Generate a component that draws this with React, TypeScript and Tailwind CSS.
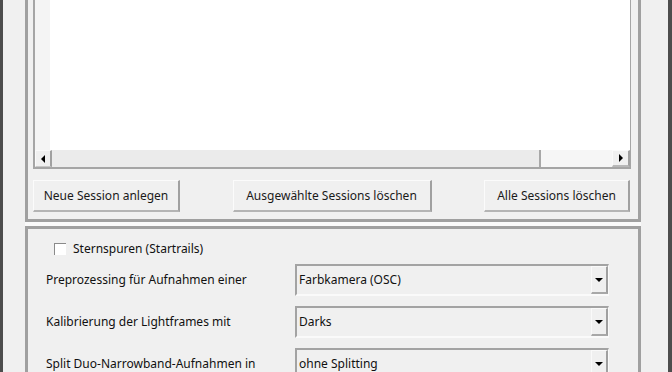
import React from 'react'

function WinButton({ label, width }: { label: string; width: string }) {
  return (
    <div
      className={`${width} h-[32px] flex items-center justify-center bg-[#f0f0f0] border-t border-l border-[#fbfbfb] border-r-2 border-b-2 border-r-[#a0a0a0] border-b-[#b4b4b4] text-[12px] text-[#1a1a1a]`}
    >
      {label}
    </div>
  )
}

function ComboBox({ value }: { value: string }) {
  return (
    <div className="w-[314px] h-[32px] flex bg-[#f0f0f0] border-t-2 border-l-2 border-[#a3a3a3] border-r border-b-2 border-r-[#fafafa] border-b-[#fafafa]">
      <div className="flex-1 flex items-center pl-[2px] text-[12px] text-[#111]">{value}</div>
      <div className="w-[17px] flex items-center justify-center border-t border-l border-[#fafafa] border-r-2 border-b-2 border-r-[#a0a0a0] border-b-[#a8a8a8]">
        <div className="w-0 h-0 border-l-[4px] border-r-[4px] border-t-[4px] border-l-transparent border-r-transparent border-t-black" />
      </div>
    </div>
  )
}

const rows = [
  { label: 'Preprozessing für Aufnahmen einer', value: 'Farbkamera (OSC)' },
  { label: 'Kalibrierung der Lightframes mit', value: 'Darks' },
  { label: 'Split Duo-Narrowband-Aufnahmen in', value: 'ohne Splitting' },
]

export default function App() {
  return (
    <div
      className="w-[672px] h-[372px] overflow-hidden bg-[#f0f0f0] border-l-[3px] border-r-[4px] border-[#4d4d4d] pl-[22px] pr-[27px]"
      style={{ fontFamily: '"Noto Sans", "Open Sans", sans-serif' }}
    >
      {/* Sessions group */}
      <div className="border-x-[3px] border-b-[3px] border-[#a0a0a0] pl-[5px] pr-[7px] pb-[7px]">
        <div className="h-[169px] flex flex-col bg-white border-l-2 border-b-2 border-r border-[#a5a5a5]">
          <div className="flex-1 flex">
            <div className="w-[15px] bg-[#f4f4f4]" />
            <div className="flex-1 bg-white" />
          </div>
          {/* horizontal scrollbar */}
          <div className="h-[17px] flex bg-[#f6f6f6]">
            <div className="w-[17px] flex items-center justify-center bg-[#f0f0f0] border-t border-l border-[#fafafa] border-r-2 border-b border-r-[#a0a0a0] border-b-[#c8c8c8]">
              <div className="w-0 h-0 border-t-[4px] border-b-[4px] border-r-[4px] border-t-transparent border-b-transparent border-r-black" />
            </div>
            <div className="w-[489px] bg-[#ebebeb] border-r-2 border-[#a8a8a8]" />
            <div className="flex-1" />
            <div className="w-[18px] flex items-center justify-center bg-[#f0f0f0] border-t border-l border-[#fafafa] border-r-2 border-b-2 border-r-[#a0a0a0] border-b-[#b8b8b8]">
              <div className="w-0 h-0 border-t-[4px] border-b-[4px] border-l-[4px] border-t-transparent border-b-transparent border-l-black" />
            </div>
          </div>
        </div>
        <div className="mt-[11px] flex justify-between pr-[1px]">
          <WinButton label="Neue Session anlegen" width="w-[147px]" />
          <WinButton label="Ausgewählte Sessions löschen" width="w-[199px]" />
          <WinButton label="Alle Sessions löschen" width="w-[146px]" />
        </div>
      </div>

      <div className="h-[4px] bg-[#fafafa]" />

      {/* Options group */}
      <div className="border-x-[3px] border-t-[3px] border-[#a0a0a0] h-[200px] pl-[18px]">
        <div className="mt-[11px] h-[18px] flex items-center pl-[8px] text-[12px] text-[#111]">
          <div className="w-[12px] h-[12px] bg-white border-t border-l border-[#8a8a8a] mr-[7px]" />
          Sternspuren (Startrails)
        </div>
        <div className="mt-[6px] flex flex-col gap-[10px]">
          {rows.map((r) => (
            <div key={r.label} className="flex items-center">
              <div className="w-[249px] text-[12px] text-[#111]">{r.label}</div>
              <ComboBox value={r.value} />
            </div>
          ))}
        </div>
      </div>
    </div>
  )
}
